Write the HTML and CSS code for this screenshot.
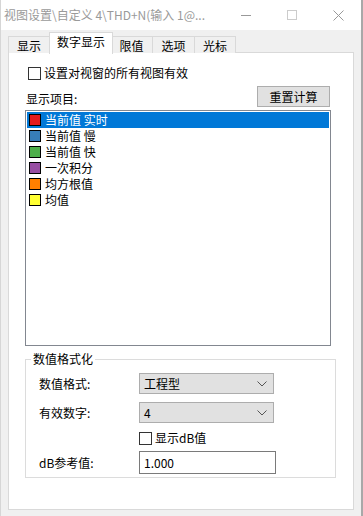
FILE: index.html
```html
<!DOCTYPE html>
<html lang="zh">
<head>
<meta charset="utf-8">
<link rel="stylesheet" href="styles.css">
</head>
<body>
<div class="window">
  <div class="titlebar">
    <div class="title">视图设置\自定义 4\THD+N(输入 1@...</div>
    <div class="ctrls">
      <div class="ctrl"><svg width="10" height="10" viewBox="0 0 10 10"><path d="M0 5.5H10" stroke="#999" stroke-width="1"/></svg></div>
      <div class="ctrl"><svg width="10" height="10" viewBox="0 0 10 10"><rect x="0.5" y="0.5" width="9" height="9" fill="none" stroke="#ccc"/></svg></div>
      <div class="ctrl"><svg width="11" height="11" viewBox="0 0 11 11"><path d="M0.5 0.5L10.5 10.5M10.5 0.5L0.5 10.5" stroke="#999" stroke-width="1"/></svg></div>
    </div>
  </div>
  <div class="body">
    <div class="tabs">
      <div class="tab t1">显示</div>
      <div class="tab sel">数字显示</div>
      <div class="tab t3">限值</div>
      <div class="tab t4">选项</div>
      <div class="tab t5">光标</div>
    </div>
    <div class="panel">
      <label class="chk-row top-chk"><span class="box"></span><span>设置对视窗的所有视图有效</span></label>
      <div class="items-head">
        <span class="lbl">显示项目:</span>
        <div class="btn">重置计算</div>
      </div>
      <div class="list">
        <div class="item active"><span class="sw" style="background:#e41a1c"></span>当前值 实时</div>
        <div class="item"><span class="sw" style="background:#377eb8"></span>当前值 慢</div>
        <div class="item"><span class="sw" style="background:#4daf4a"></span>当前值 快</div>
        <div class="item"><span class="sw" style="background:#984ea3"></span>一次积分</div>
        <div class="item"><span class="sw" style="background:#ff7f00"></span>均方根值</div>
        <div class="item"><span class="sw" style="background:#ffff33"></span>均值</div>
      </div>
      <fieldset class="group">
        <legend>数值格式化</legend>
        <div class="frow r1">
          <span class="flbl">数值格式:</span>
          <div class="combo"><span>工程型</span><svg width="10" height="6" viewBox="0 0 10 6"><path d="M0.5 0.5L5 5L9.5 0.5" fill="none" stroke="#555"/></svg></div>
        </div>
        <div class="frow r2">
          <span class="flbl">有效数字:</span>
          <div class="combo"><span>4</span><svg width="10" height="6" viewBox="0 0 10 6"><path d="M0.5 0.5L5 5L9.5 0.5" fill="none" stroke="#555"/></svg></div>
        </div>
        <div class="frow r3">
          <span class="flbl"></span>
          <label class="chk-row"><span class="box"></span><span>显示dB值</span></label>
        </div>
        <div class="frow r4">
          <span class="flbl">dB参考值:</span>
          <div class="input">1.000</div>
        </div>
      </fieldset>
    </div>
  </div>
</div>
</body>
</html>
```

FILE: styles.css
```css
* { box-sizing: border-box; }
html, body { margin: 0; padding: 0; }
body {
  width: 363px;
  height: 516px;
  overflow: hidden;
  background: #f0f0f0;
  font-family: "Noto Sans CJK SC", "Microsoft YaHei", sans-serif;
  font-size: 12px;
  color: #000;
}
.window {
  width: 363px;
  height: 516px;
  display: flex;
  flex-direction: column;
  border-right: 2px solid #a8a8a8;
  border-left: 1px solid #d6d6d6;
}
.titlebar {
  height: 30px;
  background: #fff;
  display: flex;
  align-items: center;
  justify-content: space-between;
  flex: none;
}
.title {
  color: #9a9a9a;
  padding-left: 3px;
  font-size: 12px;
  line-height: 16px;
  white-space: nowrap;
}
.ctrls { display: flex; height: 30px; }
.ctrl {
  width: 46px;
  height: 30px;
  display: flex;
  align-items: center;
  justify-content: center;
}
.body {
  flex: 1;
  padding: 2px 0 0 7px;
  display: flex;
  flex-direction: column;
}
.tabs {
  display: flex;
  align-items: flex-end;
  height: 21px;
  position: relative;
  z-index: 1;
  margin-bottom: -1px;
}
.tab {
  height: 17px;
  border: 1px solid #d9d9d9;
  border-bottom: none;
  background: #f0f0f0;
  text-align: center;
  line-height: 16px;
  padding-top: 1px;
  margin-left: -1px;
}
.t1 { width: 42px; margin-left: 0; }
.sel {
  height: 22px;
  width: 64px;
  background: #fff;
  margin-left: -1px;
  margin-right: -2px;
  position: relative;
  z-index: 2;
  line-height: 18px;
  padding-top: 0;
  margin-bottom: -1px;
}
.t3 { width: 43px; }
.t4 { width: 43px; }
.t5 { width: 42px; }
.panel {
  width: 346px;
  height: 458px;
  background: #fff;
  border: 1px solid #d9d9d9;
  display: flex;
  flex-direction: column;
}
.chk-row {
  display: flex;
  align-items: center;
  gap: 3px;
  line-height: 16px;
}
.box {
  width: 13px;
  height: 13px;
  border: 1px solid #333;
  background: #fff;
  flex: none;
}
.top-chk {
  margin-top: 12px;
  padding-left: 19px;
}
.items-head {
  display: flex;
  justify-content: space-between;
  align-items: flex-end;
  padding-left: 17px;
  padding-right: 23px;
  margin-top: 5px;
}
.lbl { line-height: 16px; }
.btn {
  width: 73px;
  height: 21px;
  background: #e1e1e1;
  border: 1px solid #adadad;
  display: flex;
  align-items: center;
  justify-content: center;
  line-height: 16px;
}
.list {
  margin-top: 3px;
  margin-left: 16px;
  width: 306px;
  height: 236px;
  border: 1px solid #828790;
  padding: 1px;
  flex: none;
}
.item {
  height: 16px;
  display: flex;
  align-items: center;
  line-height: 16px;
  padding-left: 2px;
  gap: 4px;
}
.item.active { background: #0078d7; color: #fff; }
.sw {
  width: 12px;
  height: 12px;
  border: 1px solid #000;
  flex: none;
}
.group {
  margin: 5px 0 0 16px;
  width: 311px;
  height: 127px;
  border: 1px solid #dcdcdc;
  padding: 0 0 0 13px;
}
.group legend {
  padding: 0 2px;
  margin-left: -8px;
  line-height: 16px;
}
.frow {
  display: flex;
  align-items: center;
}
.flbl { width: 100px; flex: none; line-height: 16px; }
.r1 { margin-top: 6px; }
.r2 { margin-top: 8px; }
.r3 { margin-top: 8px; height: 14px; }
.r4 { margin-top: 6px; }
.combo {
  width: 135px;
  height: 21px;
  background: #e1e1e1;
  border: 1px solid #adadad;
  display: flex;
  align-items: center;
  justify-content: space-between;
  padding: 0 6px 0 4px;
}
.input {
  width: 137px;
  height: 23px;
  border: 1px solid #7a7a7a;
  background: #fff;
  display: flex;
  align-items: center;
  padding-left: 4px;
}
```
